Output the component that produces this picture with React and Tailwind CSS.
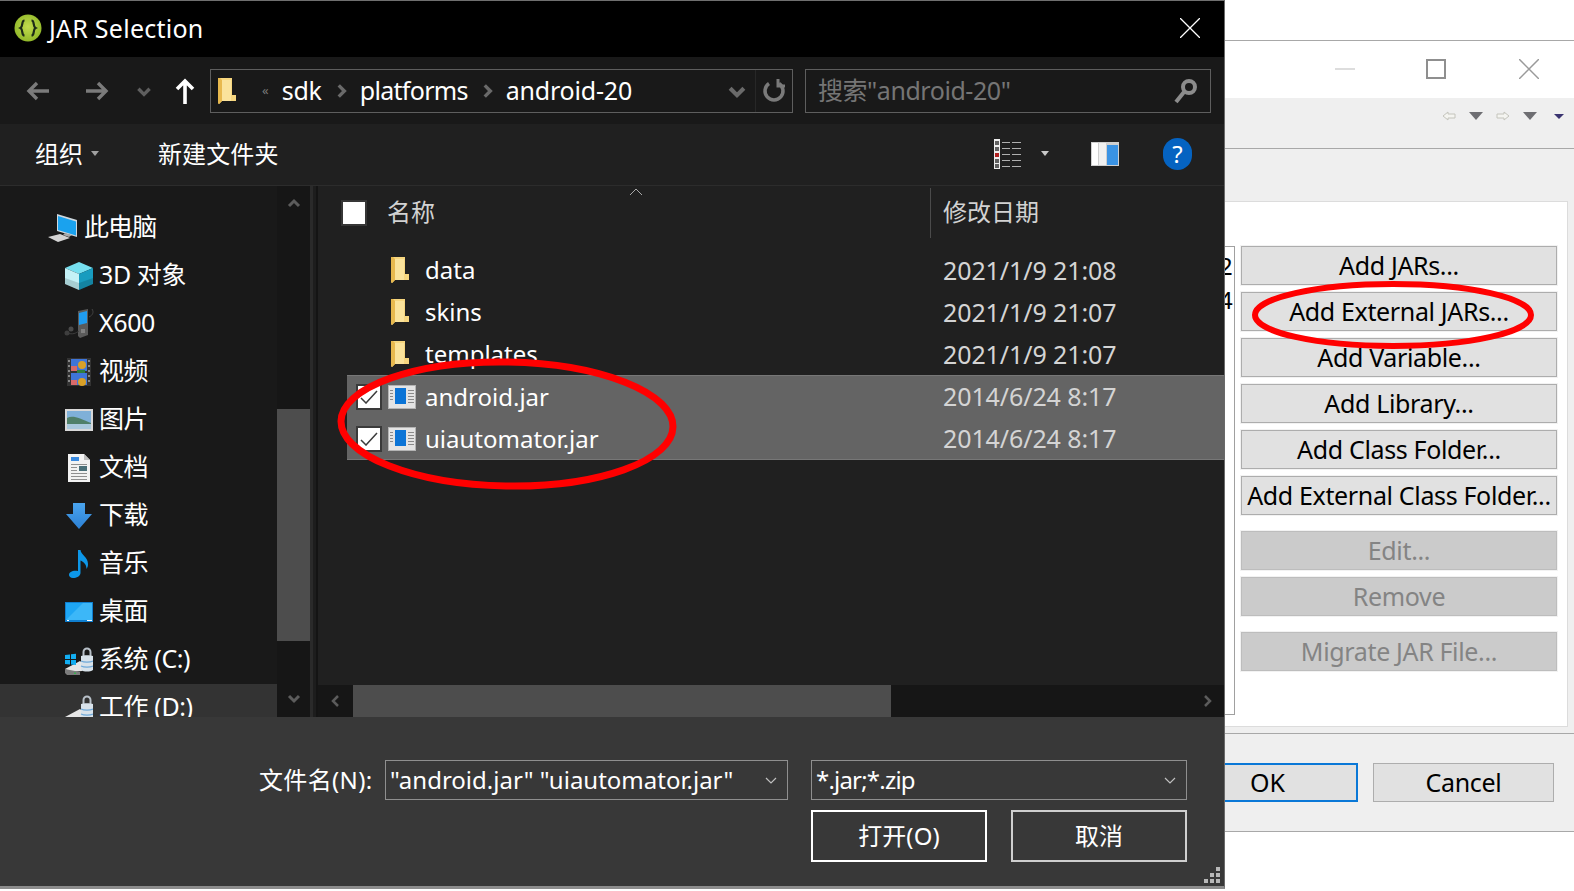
const uiFont = '[font-family:"Noto_Sans","Noto_Sans_CJK_SC",sans-serif]';

// Explorer folder, yellow with the darker fold on the left
function FolderIcon({ className }) {
  return (
    <svg className={className} viewBox="0 0 18 26" width="18" height="26">
      <path d="M0 0h14v17h4v6H4l-3 3-1-1z" fill="#f6d67f" />
      <path d="M0 0h2l2 2v21l-3 3-1-1z" fill="#e8b94e" />
      <path d="M4 2h9v21H4z" fill="#fbe39b" />
    </svg>
  );
}

function JarIcon() {
  return (
    <svg viewBox="0 0 28 24" width="28" height="24" className="shrink-0">
      <path d="M0 0h28v24H0z" fill="#b4b4b4" />
      <path d="M1 1h26v22H1z" fill="#e4e4e4" />
      <path d="M7 3h11v16H7z" fill="#0b74d6" />
      <path d="M2 5h3v1H2zM2 8h3v1H2zM2 11h3v1H2zM2 14h3v1H2zM20 5h6v1h-6zM20 8h6v1h-6zM20 11h6v1h-6zM20 14h6v1h-6zM20 17h6v1h-6z" fill="#8a8a8a" />
    </svg>
  );
}

function Chevron({ dir = 'down', className = '', size = 16, color = '#6a6a6a', width = 3 }) {
  const d = {
    down: 'M3 6l5 5 5-5',
    up: 'M3 10l5-5 5 5',
    left: 'M10 3L5 8l5 5',
    right: 'M6 3l5 5-5 5',
  }[dir];
  return (
    <svg className={className} viewBox="0 0 16 16" width={size} height={size} fill="none" stroke={color} strokeWidth={width}>
      <path d={d} />
    </svg>
  );
}

function NavArrow({ flip, color = '#7b7b7b', className = '' }) {
  return (
    <svg className={className} viewBox="0 0 24 20" width="24" height="20" fill="none" stroke={color} strokeWidth="3.4" style={flip ? { transform: 'scaleX(-1)' } : undefined}>
      <path d="M23 10H3M11 2l-8 8 8 8" />
    </svg>
  );
}

function Caret({ className = '', color = '#a0a0a0' }) {
  return (
    <svg className={className} viewBox="0 0 8 5" width="8" height="5">
      <path d="M0 0h8L4 5z" fill={color} />
    </svg>
  );
}

function LogoIcon() {
  return (
    <svg viewBox="0 0 28 28" width="28" height="28" className="shrink-0">
      <defs>
        <radialGradient id="lime" cx="0.5" cy="0.45" r="0.6">
          <stop offset="0" stopColor="#c2dc4e" />
          <stop offset="1" stopColor="#8db526" />
        </radialGradient>
      </defs>
      <circle cx="14" cy="14" r="13.5" fill="url(#lime)" />
      <path d="M10.500 6.500C7 6.500 9.500 12.500 6.500 14c3 1.500.5 7.500 4 7.500M17.500 6.500c3.500 0 1 6 4 7.500-3 1.500-.5 7.500-4 7.500" fill="none" stroke="#1c2a18" strokeWidth="2.200" />
    </svg>
  );
}

function SidebarIcon({ name }) {
  switch (name) {
    case 'pc':
      return (
        <svg viewBox="0 0 30 28" width="30" height="28">
          <path d="M9 0l20 6v17L9 17z" fill="#cfd8de" />
          <path d="M10 2l18 5.500v14L10 16z" fill="#1aa2ee" />
          <path d="M0 23l12-3 10 4-12 4z" fill="#d4d4d4" />
          <path d="M17 19l7 2-3 2-6-2z" fill="#a9a9a9" />
        </svg>
      );
    case 'cube':
      return (
        <svg viewBox="0 0 28 28" width="28" height="28">
          <path d="M14 0l14 6-14 6L0 6z" fill="#76dfef" />
          <path d="M0 6l14 6v16L0 22z" fill="#c4f1f6" />
          <path d="M28 6L14 12v16l14-6z" fill="#189cbf" />
          <path d="M0 16l14 5 14-5v6l-14 6-14-6z" fill="#000" opacity=".15" />
        </svg>
      );
    case 'player':
      return (
        <svg viewBox="0 0 30 30" width="30" height="30">
          <path d="M14 2l10-2v26l-8 3-2-2z" fill="#5a5a5a" />
          <path d="M15 4l8-2v12l-8 2z" fill="#1f9cf0" />
          <path d="M17 20h4v4h-4z" fill="#808080" />
          <path d="M25 8c4-2 5-5 3-8" fill="none" stroke="#444" strokeWidth="1" />
          <circle cx="7" cy="20" r="2.500" fill="#4a4a4a" />
          <circle cx="3" cy="24" r="2.500" fill="#3e3e3e" />
          <path d="M3 24c6 2 9 0 12-2" fill="none" stroke="#3e3e3e" />
        </svg>
      );
    case 'video':
      return (
        <svg viewBox="0 0 24 28" width="24" height="28">
          <path d="M0 0h24v28H0z" fill="#333" />
          <path d="M4 1h16v12H4z" fill="#3f75d8" />
          <path d="M4 15h16v12H4z" fill="#3f75d8" />
          <path d="M4 8h6v5H4zM4 22h6v5H4z" fill="#d86a6a" />
          <circle cx="15" cy="7" r="4" fill="#d8a028" />
          <circle cx="15" cy="24" r="4" fill="#d8a028" />
          <path d="M10 12h8v3h-8z" fill="#2f8040" />
          <path d="M1 2h2v2H1zM1 7h2v2H1zM1 12h2v2H1zM1 17h2v2H1zM1 22h2v2H1zM21 2h2v2h-2zM21 7h2v2h-2zM21 12h2v2h-2zM21 17h2v2h-2zM21 22h2v2h-2z" fill="#888" />
        </svg>
      );
    case 'pic':
      return (
        <svg viewBox="0 0 28 22" width="28" height="22">
          <path d="M0 0h28v22H0z" fill="#d8d8d8" />
          <path d="M2 2h24v18H2z" fill="#7fb0d8" />
          <path d="M2 9c6-3 12 0 24 5v6H2z" fill="#4f7f68" />
          <path d="M2 15h24v5H2z" fill="#a9c8dc" />
        </svg>
      );
    case 'doc':
      return (
        <svg viewBox="0 0 22 28" width="22" height="28">
          <path d="M0 0h16l6 6v22H0z" fill="#f2f2f2" />
          <path d="M16 0l6 6h-6z" fill="#bcbcbc" />
          <path d="M3 3h8v4H3z" fill="#3a8ae0" />
          <path d="M3 10h16v1H3zM3 19h16v1H3zM3 22h16v1H3zM3 25h16v1H3zM3 13h6v1H3zM3 16h6v1H3z" fill="#8f8f8f" />
          <path d="M11 12h8v5h-8z" fill="#4a6f78" />
        </svg>
      );
    case 'down':
      return (
        <svg viewBox="0 0 26 26" width="26" height="26">
          <defs>
            <linearGradient id="dl" x1="0" y1="0" x2="0" y2="1">
              <stop offset="0" stopColor="#4aa4ee" />
              <stop offset="1" stopColor="#2c80d4" />
            </linearGradient>
          </defs>
          <path d="M7 0h12v11h7L13 26 0 11h7z" fill="url(#dl)" />
        </svg>
      );
    case 'music':
      return (
        <svg viewBox="0 0 20 28" width="20" height="28">
          <path d="M9 0h2.500c.5 5 7.500 7 7.500 14 0 2-.5 3.500-1.500 5 0-5-3-7-6-8.500V23c0 3-4 5-7.500 5C1.500 28 0 26.500 0 25c0-3 4-5 9-4z" fill="#0d97e8" />
        </svg>
      );
    case 'desktop':
      return (
        <svg viewBox="0 0 28 20" width="28" height="20">
          <path d="M0 0h28v20H0z" fill="#0f7fd0" />
          <path d="M1 1h26v17H1z" fill="#1ea6f4" />
          <path d="M1 18L18 1h9v17z" fill="#3cb7f8" />
          <path d="M2 18h2v1H2zM22 18h5v1h-5z" fill="#fff" />
        </svg>
      );
    case 'sys':
    case 'work':
      return (
        <svg viewBox="0 0 28 29" width="28" height="29">
          <path d="M0 23l15-8 6 5-4 5-11 1z" fill="#e6e6e6" />
          <path d="M0 23l15 3v3H2l-2-2z" fill="#7c7c7c" />
          <path d="M9 26.500h2v1.500H9z" fill="#38b050" />
          <path d="M18.500 11V6a3.500 3.500 0 017 0v5" fill="none" stroke="#b8c0c8" strokeWidth="2" />
          <path d="M16 10c3-1 9-1 12 0v14c-3 2-9 2-12 0z" fill="#d8e2ea" />
          <path d="M16 15c3 1.500 9 1.500 12 0M16 20c3 1.500 9 1.500 12 0" fill="none" stroke="#6ea8d8" strokeWidth="1.200" />
          {name === 'sys' && <path d="M0 9l5-.5V13H0zM6 8.300l5-.5V13H6zM0 14h5v4.500L0 18zM6 14h5v5l-5-.5z" fill="#12aef2" />}
        </svg>
      );
    default:
      return null;
  }
}

const sidebarItems = [
  { label: '此电脑', icon: 'pc', root: true },
  { label: '3D 对象', icon: 'cube' },
  { label: 'X600', icon: 'player' },
  { label: '视频', icon: 'video' },
  { label: '图片', icon: 'pic' },
  { label: '文档', icon: 'doc' },
  { label: '下载', icon: 'down' },
  { label: '音乐', icon: 'music' },
  { label: '桌面', icon: 'desktop' },
  { label: '系统 (C:)', icon: 'sys' },
  { label: '工作 (D:)', icon: 'work', active: true },
];

const fileRows = [
  { name: 'data', date: '2021/1/9 21:08' },
  { name: 'skins', date: '2021/1/9 21:07' },
  { name: 'templates', date: '2021/1/9 21:07' },
  { name: 'android.jar', date: '2014/6/24 8:17', jar: true },
  { name: 'uiautomator.jar', date: '2014/6/24 8:17', jar: true },
];

function SidebarRow({ item }) {
  return (
    <div className={`flex h-12 shrink-0 items-center ${item.active ? 'bg-[#333333]' : ''} ${item.root ? 'pl-[42px]' : 'pl-[59px]'}`}>
      <span className={`flex h-[30px] shrink-0 items-center justify-center ${item.root ? 'w-[42px]' : 'w-[40px]'}`}>
        <SidebarIcon name={item.icon} />
      </span>
      <span className={`whitespace-nowrap pb-[4px] text-[25px] leading-none text-white ${item.root ? 'tracking-[-0.9px]' : 'tracking-[-0.4px]'}`}>{item.label}</span>
    </div>
  );
}

function FileRow({ row }) {
  return (
    <div className="flex h-[42px] items-center">
      <div className={`flex h-full w-[596px] items-center ${row.jar ? 'pl-[9px]' : 'pl-[44px]'}`}>
        {row.jar && (
          <>
            <span className="flex h-[26px] w-[26px] items-center justify-center border-2 border-[#3a3a3a] bg-white">
              <svg viewBox="0 0 18 14" width="18" height="14" fill="none" stroke="#3c3c3c" strokeWidth="1.500">
                <path d="M1 8l5 5L17 1" />
              </svg>
            </span>
            <span className="ml-[6px] flex"><JarIcon /></span>
          </>
        )}
        {!row.jar && <FolderIcon className="shrink-0" />}
        <span className={`text-[24px] leading-none text-white ${row.jar ? 'ml-[9px]' : 'ml-[16px]'}`}>{row.name}</span>
      </div>
      <span className={`whitespace-nowrap text-[25px] leading-none tracking-[-0.1px] text-[#d4d4d4] ${row.jar ? 'pb-[2px]' : ''}`}>{row.date}</span>
    </div>
  );
}

function ComboBox({ value, className, textClass = '' }) {
  return (
    <div className={`flex h-[40px] items-center justify-between border border-[#8f8f8f] pl-[4px] pr-[8px] ${className}`}>
      <span className={`whitespace-nowrap text-[24px] leading-none text-white ${textClass}`}>{value}</span>
      <Chevron size={16} color="#c0c0c0" width={1.2} />
    </div>
  );
}

function JarDialog() {
  return (
    <div className="flex h-[889px] w-[1225px] shrink-0 flex-col border-t border-r border-b-[3px] border-t-[#6f6f6f] border-r-[#6a6a6a] border-b-[#8c8c8c]">
      {/* Title bar */}
      <div className="flex h-[56px] shrink-0 items-center justify-between bg-black pb-[2px] pl-[14px] pr-[24px]">
        <div className="flex items-center gap-[7px]">
          <LogoIcon />
          <span className="text-[25px] leading-none tracking-[0.25px] text-white">JAR Selection</span>
        </div>
        <svg viewBox="0 0 20 20" width="20" height="20" stroke="#ffffff" strokeWidth="1.300">
          <path d="M0 0l20 20M20 0L0 20" />
        </svg>
      </div>

      {/* Address row */}
      <div className="flex h-[67px] shrink-0 items-center bg-[#191919]">
        <div className="flex w-[210px] items-center pl-[26px]">
          <NavArrow />
          <NavArrow flip className="ml-[35px]" />
          <Chevron className="ml-[26px]" size={18} color="#5f5f5f" />
          <svg className="ml-[22px]" viewBox="0 0 20 26" width="20" height="26" fill="none" stroke="#ffffff" strokeWidth="3.600">
            <path d="M10 26V3M2 11l8-8 8 8" />
          </svg>
        </div>
        <div className="flex h-[44px] w-[583px] items-center border border-[#5e5e5e] pl-[7px]">
          <FolderIcon />
          <span className="ml-[26px] text-[13px] leading-none text-[#7a7a7a]">«</span>
          <span className="ml-[13px] pb-[1px] text-[25px] leading-none tracking-[-0.2px] text-white">sdk</span>
          <Chevron dir="right" className="ml-[10px]" size={18} color="#6a6a6a" />
          <span className="ml-[10px] pb-[1px] text-[25px] leading-none tracking-[-0.7px] text-white">platforms</span>
          <Chevron dir="right" className="ml-[10px]" size={18} color="#6a6a6a" />
          <span className="ml-[10px] pb-[1px] text-[25px] leading-none tracking-[-0.2px] text-white">android-20</span>
          <div className="ml-auto flex h-full items-center">
            <Chevron className="mr-[7px]" size={22} color="#6a6a6a" />
            <span className="flex h-full w-[37px] items-center justify-center border-l border-[#272727]">
              <svg viewBox="0 0 24 24" width="24" height="24" fill="none" stroke="#7a7a7a" strokeWidth="3.500">
                <path d="M7 4.500a9 9 0 1 0 10 0" />
                <path d="M16 0v7h7" strokeWidth="3" />
              </svg>
            </span>
          </div>
        </div>
        <div className="ml-[12px] flex h-[44px] w-[406px] items-center justify-between border border-[#5e5e5e] pl-[12px] pr-[12px]">
          <span className="pb-[1px] text-[25px] leading-none tracking-[-0.45px] text-[#757575]">搜索"android-20"</span>
          <svg viewBox="0 0 24 26" width="24" height="26" fill="none" stroke="#8c8c8c">
            <circle cx="15" cy="9" r="6" strokeWidth="4" />
            <path d="M10 14L2 24" strokeWidth="4" />
          </svg>
        </div>
      </div>

      {/* Command row */}
      <div className="flex h-[61px] shrink-0 items-center bg-[#202020] pb-[2px]">
        <span className="ml-[35px] text-[24px] leading-none text-white">组织</span>
        <Caret className="ml-[8px]" />
        <span className="ml-[59px] text-[24px] leading-none tracking-[0.1px] text-white">新建文件夹</span>
        <div className="ml-auto flex items-center pr-[32px]">
          <svg viewBox="0 0 28 30" width="28" height="30">
            <path d="M0 0h6v30H0z" fill="#eeeeee" />
            <path d="M1 2h4v4H1zM1 8h4v4H1zM1 20h4v4H1zM1 25h4v4H1z" fill="#606060" />
            <path d="M1 14h4v4H1z" fill="#b02020" />
            <path d="M8 3h8v1H8zM18 3h9v1h-9zM8 9h8v1H8zM18 9h9v1h-9zM8 15h8v1H8zM18 15h9v1h-9zM8 21h8v1H8zM18 21h9v1h-9zM8 27h8v1H8zM18 27h9v1h-9z" fill="#b0b0b0" />
          </svg>
          <Caret className="ml-[19px]" color="#c8c8c8" />
          <svg className="ml-[42px]" viewBox="0 0 28 24" width="28" height="24">
            <path d="M0 0h28v24H0z" fill="#cfcfcf" />
            <path d="M1 1h6v22H1z" fill="#ffffff" />
            <path d="M8 1h7v22H8z" fill="#f0f0f0" />
            <path d="M16 3h11v20H16z" fill="#3a93e4" />
          </svg>
          <span className="ml-[44px] flex h-[32px] w-[29px] items-center justify-center rounded-full bg-[#0563c1] text-[24px] leading-none text-white">?</span>
        </div>
      </div>

      {/* Navigation pane and file list */}
      <div className="flex h-[532px] shrink-0 overflow-hidden border-t border-[#2c2c2c]">
        <div className="flex h-full w-[277px] shrink-0 flex-col overflow-hidden bg-[#191919] pt-[18px]">
          {sidebarItems.map((item) => (
            <SidebarRow key={item.label} item={item} />
          ))}
        </div>
        <div className="flex w-[33px] shrink-0 flex-col items-center bg-[#161616]">
          <Chevron dir="up" className="mt-[10px] mb-[197px]" size={16} color="#5c5c5c" />
          <div className="h-[232px] w-full bg-[#4d4d4d]" />
          <Chevron dir="down" className="mt-[49px]" size={16} color="#5c5c5c" />
        </div>
        <div className="w-[8px] shrink-0 border-l-[3px] border-r-[2px] border-l-[#2a2a2a] border-r-[#141414] bg-[#1d1d1d]" />
        <div className="flex min-w-0 flex-1 flex-col bg-[#202020]">
          <div className="flex h-[54px] shrink-0 items-center">
            <span className="ml-[23px] h-[26px] w-[26px] border-2 border-[#363636] bg-white" />
            <span className="ml-[20px] pb-[2px] text-[24px] leading-none text-[#d2d2d2]">名称</span>
            <svg className="ml-[194px] mb-[43px]" viewBox="0 0 14 8" width="14" height="8" fill="none" stroke="#a8a8a8" strokeWidth="1">
              <path d="M1 7l6-6 6 6" />
            </svg>
            <span className="ml-[287px] h-[50px] w-px bg-[#4b4b4b]" />
            <span className="ml-[12px] pb-[2px] text-[24px] leading-none text-[#d2d2d2]">修改日期</span>
          </div>
          <div className="flex min-h-0 flex-1 flex-col pl-[29px] pt-[9px]">
            {fileRows.slice(0, 3).map((row) => (
              <FileRow key={row.name} row={row} />
            ))}
            <div className="h-[85px] border-y border-[#777777] bg-[#646464]">
              {fileRows.slice(3).map((row) => (
                <FileRow key={row.name} row={row} />
              ))}
            </div>
          </div>
          <div className="flex h-[32px] shrink-0 items-center bg-[#161616]">
            <span className="flex w-[35px] justify-center">
              <Chevron dir="left" size={16} color="#5c5c5c" width={2.5} />
            </span>
            <div className="h-full w-[538px] bg-[#4d4d4d]" />
            <span className="ml-auto flex w-[35px] justify-center">
              <Chevron dir="right" size={16} color="#5c5c5c" width={2.5} />
            </span>
          </div>
        </div>
      </div>

      {/* File name and buttons */}
      <div className="relative min-h-0 flex-1 bg-[#383838] pt-[43px]">
        <div className="flex items-center">
          <span className="ml-[259px] w-[126px] shrink-0 whitespace-nowrap pb-[1px] text-[24px] leading-none tracking-[0.35px] text-white">文件名(N):</span>
          <ComboBox value={'"android.jar" "uiautomator.jar"'} className="w-[403px]" />
          <ComboBox value="*.jar;*.zip" className="ml-[23px] w-[376px]" textClass="tracking-[-0.8px]" />
        </div>
        <div className="mt-[10px] flex justify-end pr-[37px]">
          <button className="h-[52px] w-[176px] border-2 border-white text-[24px] leading-none tracking-[0.1px] text-white">打开(O)</button>
          <button className="ml-[24px] h-[52px] w-[176px] border-2 border-[#cfcfcf] text-[24px] leading-none text-white">取消</button>
        </div>
        {/* resize grip */}
        <svg className="absolute bottom-[3px] right-[4px]" viewBox="0 0 16 16" width="16" height="16" fill="#b8b8b8">
          <path d="M12 0h4v4h-4zM6 6h4v4H6zM12 6h4v4h-4zM0 12h4v4H0zM6 12h4v4H6zM12 12h4v4h-4z" />
        </svg>
      </div>
    </div>
  );
}

function ActionButton({ label, disabled, className = '' }) {
  return (
    <div className={`flex h-[39px] shrink-0 items-center justify-center border pb-[1px] text-[25px] leading-none tracking-[-0.35px] outline outline-1 outline-[#f2f2f2] ${disabled ? 'border-[#bdbdbd] bg-[#cbcbcb] text-[#848484]' : 'border-[#adadad] bg-[#e1e1e1] text-black'} ${className}`}>
      {label}
    </div>
  );
}

function BuildPathPanel() {
  return (
    <div className="flex h-[891px] min-w-0 flex-1 flex-col bg-white">
      <div className="h-[41px] shrink-0 border-b border-[#a8a8a8]" />
      <div className="flex h-[57px] shrink-0 items-center justify-end pb-[2px] pr-[35px]">
        <span className="h-[2px] w-[20px] bg-[#dddddd]" />
        <span className="ml-[71px] h-[20px] w-[20px] border-2 border-[#8f8f8f]" />
        <svg className="ml-[73px]" viewBox="0 0 20 20" width="20" height="20" stroke="#9a9a9a" strokeWidth="1.500">
          <path d="M0 0l20 20M20 0L0 20" />
        </svg>
      </div>
      <div className="flex h-[51px] shrink-0 items-center justify-end border-b border-[#a8a8a8] bg-[#efefef] pb-[14px] pr-[10px]">
        <svg viewBox="0 0 14 10" width="14" height="10" fill="#f4f4f0" stroke="#c4c4bc">
          <path d="M1 5l5-4v2h7v4H6v2z" />
        </svg>
        <svg className="ml-[13px]" viewBox="0 0 14 8" width="14" height="8"><path d="M0 0h14L7 8z" fill="#6e6e72" /></svg>
        <svg className="ml-[13px]" viewBox="0 0 14 10" width="14" height="10" fill="#f4f4f0" stroke="#c4c4bc">
          <path d="M13 5L8 1v2H1v4h7v2z" />
        </svg>
        <svg className="ml-[13px]" viewBox="0 0 14 8" width="14" height="8"><path d="M0 0h14L7 8z" fill="#6e6e72" /></svg>
        <svg className="ml-[17px]" viewBox="0 0 10 5" width="10" height="5"><path d="M0 0h10L5 5z" fill="#3a3470" /></svg>
      </div>
      <div className="min-h-0 flex-1 bg-[#efefef] pt-[52px]">
        <div className="mr-[6px] flex h-[526px] border-y border-r border-[#dcdcdc] bg-white pt-[44px]">
          <div className="h-[469px] w-[10px] shrink-0 overflow-hidden border-y border-r border-[#a0a0a0] pt-[2px] text-[24px] leading-[34px] text-black">
            <div className="-ml-[6px]">2</div>
            <div className="-ml-[6px]">4</div>
          </div>
          <div className="ml-[6px] flex w-[316px] shrink-0 flex-col">
            <div className="flex flex-col gap-[7px]">
              <ActionButton label="Add JARs..." />
              <ActionButton label="Add External JARs..." />
              <ActionButton label="Add Variable..." />
              <ActionButton label="Add Library..." />
              <ActionButton label="Add Class Folder..." />
              <ActionButton label="Add External Class Folder..." />
            </div>
            <ActionButton label="Edit..." disabled className="mt-[16px]" />
            <ActionButton label="Remove" disabled className="mt-[7px]" />
            <ActionButton label="Migrate JAR File..." disabled className="mt-[16px]" />
          </div>
        </div>
        <div className="mt-[6px] flex h-[98px] items-start border-t border-[#a8a8a8] pt-[29px]">
          <div className="flex h-[39px] w-[133px] items-center border-2 border-l-0 border-[#0a78d7] bg-[#e1e1e1] pb-[1px] pl-[25px] text-[25px] leading-none text-black">OK</div>
          <div className="ml-[15px] flex h-[39px] w-[181px] items-center justify-center border border-[#adadad] bg-[#e1e1e1] pb-[1px] text-[25px] leading-none tracking-[-0.3px] text-black">Cancel</div>
        </div>
      </div>
      <div className="h-[60px] shrink-0 border-t border-[#a8a8a8]" />
    </div>
  );
}

export default function App() {
  return (
    <div className={`relative flex h-[891px] w-[1574px] overflow-hidden bg-white ${uiFont}`}>
      <JarDialog />
      <BuildPathPanel />

      {/* Hand-drawn annotation circles */}
      <svg className="pointer-events-none absolute left-0 top-0" width="1574" height="891" fill="none" stroke="#ff0000">
        <ellipse cx="507" cy="424" rx="166" ry="62" strokeWidth="7" transform="rotate(1 507 424)" />
        <ellipse cx="1393" cy="315" rx="138" ry="31" strokeWidth="6" />
      </svg>
    </div>
  );
}
